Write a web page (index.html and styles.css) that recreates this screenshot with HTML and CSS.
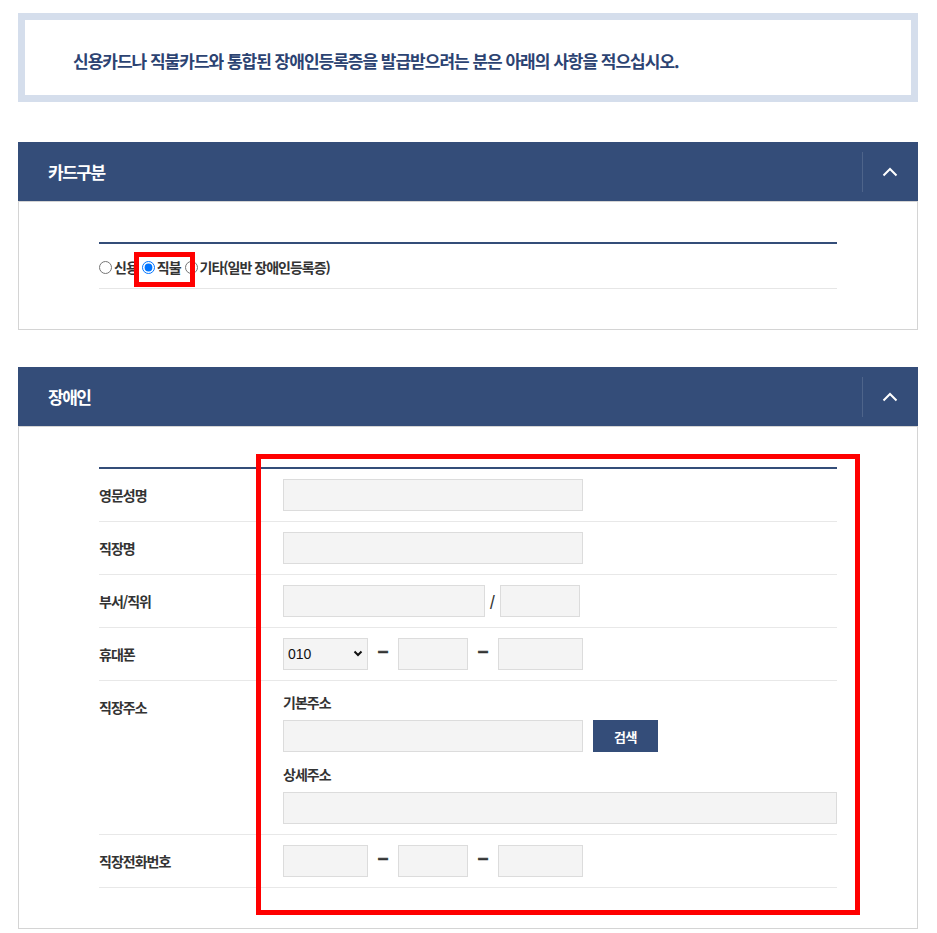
FILE: index.html
```html
<!DOCTYPE html>
<html lang="ko">
<head>
<meta charset="utf-8">
<title>장애인등록증 발급 신청</title>
<link rel="stylesheet" href="styles.css">
</head>
<body>
<div class="page">
  <div class="notice">
    <p>신용카드나 직불카드와 통합된 장애인등록증을 발급받으려는 분은 아래의 사항을 적으십시오.</p>
  </div>

  <section class="panel">
    <div class="panel-head">
      <h2>카드구분</h2>
      <button class="toggle" type="button" aria-label="접기">
        <svg width="16" height="10" viewBox="0 0 16 10"><polyline points="1.5,8.5 8,2 14.5,8.5" fill="none" stroke="#fff" stroke-width="2"/></svg>
      </button>
    </div>
    <div class="panel-body">
      <div class="form-table">
        <div class="radio-row">
          <label class="radio"><input type="radio" name="card">신용</label>
          <label class="radio"><input type="radio" name="card" checked>직불</label>
          <label class="radio"><input type="radio" name="card">기타(일반 장애인등록증)</label>
        </div>
      </div>
    </div>
  </section>

  <section class="panel">
    <div class="panel-head">
      <h2>장애인</h2>
      <button class="toggle" type="button" aria-label="접기">
        <svg width="16" height="10" viewBox="0 0 16 10"><polyline points="1.5,8.5 8,2 14.5,8.5" fill="none" stroke="#fff" stroke-width="2"/></svg>
      </button>
    </div>
    <div class="panel-body">
      <div class="form-table">
        <div class="frow">
          <div class="flabel">영문성명</div>
          <div class="fcell"><input class="field w300" type="text"></div>
        </div>
        <div class="frow">
          <div class="flabel">직장명</div>
          <div class="fcell"><input class="field w300" type="text"></div>
        </div>
        <div class="frow">
          <div class="flabel">부서/직위</div>
          <div class="fcell"><input class="field w202" type="text"><span class="slash">/</span><input class="field w80" type="text"></div>
        </div>
        <div class="frow">
          <div class="flabel">휴대폰</div>
          <div class="fcell">
            <span class="select-wrap">
              <select class="field select"><option>010</option><option>011</option><option>016</option><option>017</option></select>
              <svg class="select-arrow" width="10" height="7" viewBox="0 0 10 7"><polyline points="1.5,1.5 5,5 8.5,1.5" fill="none" stroke="#111" stroke-width="2"/></svg>
            </span>
            <span class="dash">–</span>
            <input class="field w70" type="text">
            <span class="dash">–</span>
            <input class="field w85" type="text">
          </div>
        </div>
        <div class="frow frow-top">
          <div class="flabel flabel-top">직장주소</div>
          <div class="fcell fcell-col">
            <div class="sublabel">기본주소</div>
            <div class="addr-line"><input class="field w300" type="text"><button class="btn" type="button">검색</button></div>
            <div class="sublabel sublabel-2">상세주소</div>
            <input class="field wfull" type="text">
          </div>
        </div>
        <div class="frow">
          <div class="flabel">직장전화번호</div>
          <div class="fcell">
            <input class="field w85" type="text">
            <span class="dash">–</span>
            <input class="field w70" type="text">
            <span class="dash">–</span>
            <input class="field w85" type="text">
          </div>
        </div>
      </div>
    </div>
  </section>

  <div class="mark mark-small"></div>
  <div class="mark mark-large"></div>
</div>
</body>
</html>
```

FILE: styles.css
```css
* { box-sizing: border-box; }

html, body {
  margin: 0;
  padding: 0;
  background: #fff;
}

body {
  font-family: "Noto Sans CJK KR", "Noto Sans", "Liberation Sans", sans-serif;
  color: #333;
}

.page {
  position: relative;
  width: 900px;
  margin-left: 18px;
  padding-top: 13px;
  padding-bottom: 5px;
}

/* notice */
.notice {
  border: 7px solid #d5deec;
  height: 89px;
  padding: 30px 0 0 48px;
}
.notice p {
  margin: 0;
  font-size: 17px;
  line-height: 22px;
  font-weight: 700;
  letter-spacing: -1px;
  color: #2c4372;
}

/* panels */
.panel {
  margin-top: 40px;
}
.panel + .panel {
  margin-top: 37px;
}
.panel-head {
  height: 59px;
  background: #344d79;
  display: flex;
  align-items: center;
  justify-content: space-between;
  padding-left: 30px;
}
.panel-head h2 {
  margin: 0;
  font-size: 17px;
  line-height: 24px;
  font-weight: 700;
  letter-spacing: -1.5px;
  color: #fff;
}
.toggle {
  width: 56px;
  height: 40px;
  margin-top: 1px;
  border: 0;
  border-left: 1px solid rgba(255, 255, 255, 0.13);
  background: transparent;
  padding: 0;
  display: flex;
  align-items: center;
  justify-content: center;
}
.toggle svg {
  display: block;
  margin-top: -1px;
  margin-right: 2px;
}

.panel-body {
  border: 1px solid #d4d4d4;
  padding: 40px 80px 40px 80px;
}

.form-table {
  border-top: 2px solid #344d79;
}

/* radio row */
.radio-row {
  height: 45px;
  border-bottom: 1px solid #e6e6e6;
  display: flex;
  align-items: center;
  padding-top: 2px;
}
.radio {
  display: inline-flex;
  align-items: center;
  font-size: 14px;
  font-weight: 700;
  letter-spacing: -1px;
  color: #333;
  margin-right: 4px;
}
.radio input {
  width: 13px;
  height: 13px;
  margin: 0 2px 0 0;
}

/* form rows */
.frow {
  display: grid;
  grid-template-columns: 184px 1fr;
  align-items: center;
  padding: 10px 0;
  border-bottom: 1px solid #e8e8e8;
}
.frow-top {
  align-items: start;
}
.flabel {
  font-size: 14px;
  line-height: 22px;
  font-weight: 700;
  letter-spacing: -1px;
  color: #333;
}
.flabel-top {
  margin-top: 5px;
}
.fcell {
  display: flex;
  align-items: center;
}
.fcell-col {
  flex-direction: column;
  align-items: flex-start;
}

.field {
  height: 32px;
  border: 1px solid #dcdcdc;
  background: #f4f4f4;
  margin: 0;
  padding: 0 6px;
  font-family: inherit;
  font-size: 14px;
  color: #222;
  border-radius: 0;
  outline: none;
}
.w300 { width: 300px; }
.w202 { width: 202px; }
.w80 { width: 80px; }
.w70 { width: 70px; }
.w85 { width: 85px; }
.wfull { width: 554px; }

.slash {
  width: 15px;
  text-align: center;
  font-size: 14px;
  font-weight: 700;
  color: #333;
}

.dash {
  width: 30px;
  text-align: center;
  font-family: "Liberation Sans", sans-serif;
  font-size: 19px;
  font-weight: 700;
  line-height: 20px;
  color: #333;
  margin-top: -7px;
  -webkit-text-stroke: 0.6px #333;
}

.select-wrap {
  position: relative;
  display: inline-block;
  width: 85px;
  height: 32px;
}
.select {
  width: 85px;
  -webkit-appearance: none;
  appearance: none;
  padding: 0 0 0 4px;
  font-family: "Liberation Sans", sans-serif;
  font-size: 14px;
  color: #111;
}
.select-arrow {
  position: absolute;
  right: 5px;
  top: 12px;
  pointer-events: none;
}

.sublabel {
  font-size: 14px;
  line-height: 22px;
  font-weight: 700;
  letter-spacing: -1px;
  color: #333;
  margin-bottom: 7px;
}
.sublabel-2 {
  margin-top: 11px;
}
.addr-line {
  display: flex;
  align-items: center;
}
.btn {
  width: 65px;
  height: 32px;
  margin-left: 10px;
  border: 0;
  background: #344d79;
  color: #fff;
  font-family: inherit;
  font-size: 13px;
  font-weight: 700;
  letter-spacing: -0.5px;
  padding: 0;
}

/* red annotation marks */
.mark {
  position: absolute;
  border: 5px solid #ff0000;
  pointer-events: none;
}
.mark-small {
  left: 116px;
  top: 252px;
  width: 61px;
  height: 35px;
}
.mark-large {
  left: 238px;
  top: 454px;
  width: 604px;
  height: 461px;
}
```
